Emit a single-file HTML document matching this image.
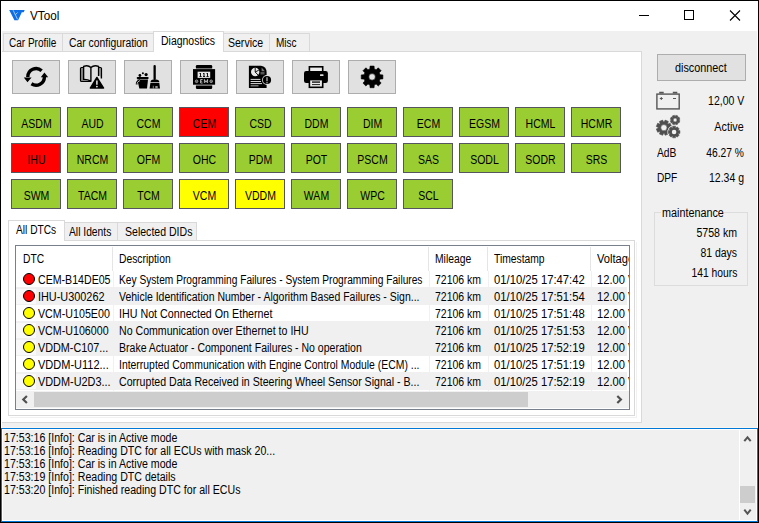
<!DOCTYPE html>
<html><head><meta charset="utf-8"><title>VTool</title>
<style>
*{box-sizing:border-box;margin:0;padding:0}
html,body{width:759px;height:523px;overflow:hidden;background:#000}
body{font-family:"Liberation Sans",sans-serif;font-size:12px;color:#000;position:relative}
div,span,svg{position:absolute}
.x{z-index:3;white-space:nowrap;line-height:14px;height:14px;transform-origin:0 50%}
.x.r{transform-origin:100% 50%}
.x.c{transform-origin:50% 50%;text-align:center}
#win{left:1px;top:1px;width:757px;height:521px;background:#f0f0f0}
#title{left:0;top:0;width:757px;height:30px;background:#fff}
.tab{top:32px;height:19px;background:#f0f0f0;border:1px solid #d9d9d9;border-bottom:none}
.tab.sel{top:30px;height:21px;background:#fff;z-index:2}
#page{left:0px;top:50px;width:641px;height:372px;background:#fff;border:1px solid #d9d9d9;border-left-color:#f4f4f4}
.tb{top:59px;width:48px;height:34px;background:#e1e1e1;border:1px solid #adadad}
.ecu{width:50px;height:30px;border:1px solid #55555f;background:#9acd32}
.ecu.r{background:#ff0000}
.ecu.y{background:#ffff00}
.ecu .x{left:0px;width:49px;top:9px}
.itab{top:221px;height:19px;background:#f0f0f0;border:1px solid #d9d9d9;border-bottom:none}
.itab.sel{top:219px;height:21px;background:#fff;z-index:2}
#ipage{left:7px;top:239px;width:627px;height:176px;background:#fff;border:1px solid #d9d9d9;box-shadow:1px 1px 0 0 #fff,2px 2px 0 0 #f1f1f1}
#lv{left:14px;top:244px;width:615px;height:165px;background:#fff;border:1px solid #7a808b;overflow:hidden}
#lvc{left:-16px;top:-246px;width:759px;height:523px}
.hd{top:247px;height:24px;width:1px;background:#e5e5e5}
.row{left:16px;width:611px;height:17px}
.row.g{background:#f0f0f0;box-shadow:0 -1px 0 0 #f0f0f0}
.row.g .ic{left:0;top:1px;width:20px;height:15px;background:#f9f9f9}
.dot{left:7px;top:2px;width:12px;height:12px;border-radius:50%;border:1px solid #000}
</style></head><body>
<div id="win">

<div id="title">
<svg style="left:-1px;top:-1px" width="40" height="30" viewBox="0 0 40 30"><path d="M9.2 10 L24.7 10 L23.7 12.2 L21.8 12.2 L18.1 20.3 L14.4 20.3 Z" fill="#0d6ee6"/><path d="M13.1 10.2 L17.5 19.3 M15.2 14.9 L17.7 12.4" fill="none" stroke="#dbe9fb" stroke-width=".7"/></svg>
<span class="x" style="top:8px;left:29.0px;transform:scaleX(0.976)">VTool</span>
<svg style="left:638px;top:0" width="119" height="30" viewBox="0 0 119 30" fill="none" stroke="#000" stroke-width="1"><path d="M0 14.500h10"/><rect x="45.500" y="9.500" width="9" height="9"/><path d="M91 9.500l10 10M101 9.500l-10 10" stroke-width="1.100"/></svg>
</div>
<div class="tab" style="left:2px;width:60px"></div>
<div class="tab" style="left:61px;width:92px"></div>
<div class="tab sel" style="left:152px;width:71px"></div>
<div class="tab" style="left:222px;width:47px"></div>
<div class="tab" style="left:268px;width:41px"></div>
<div id="page"></div>
<span class="x" style="top:35px;left:7.7px;transform:scaleX(0.834)">Car Profile</span>
<span class="x" style="top:35px;left:67.8px;transform:scaleX(0.863)">Car configuration</span>
<span class="x" style="top:33px;left:160.3px;transform:scaleX(0.872)">Diagnostics</span>
<span class="x" style="top:35px;left:227.2px;transform:scaleX(0.877)">Service</span>
<span class="x" style="top:35px;left:275.4px;transform:scaleX(0.835)">Misc</span>
<div class="tb" style="left:11px"><svg style="left:-1px;top:-1px" width="48" height="34" viewBox="0 0 48 34"><path d="M15.80 16.90 A8.3 8.3 0 0 1 29.65 10.73" fill="none" stroke="#000" stroke-width="3.4"/><path d="M19.46 23.78 A8.3 8.3 0 0 0 32.40 16.90" fill="none" stroke="#000" stroke-width="3.4"/><path d="M11.8 17.4 L19.6 17.4 L15.5 22.3Z M28.8 17.2 L36.2 17.2 L32.4 12.4Z" fill="#000"/></svg></div>
<div class="tb" style="left:67px"><svg style="left:-1px;top:-1px" width="48" height="34" viewBox="0 0 48 34"><path d="M15.6 6.4 Q20 4.6 22.9 7.6 L22.9 21.2 Q19.5 19.2 15.6 19.4Z" fill="#e1e1e1" stroke="#000" stroke-width="1.4" stroke-linejoin="round"/><path d="M15.6 7.6 L13.4 7.6 Q12.6 7.6 12.6 8.6 L12.6 20.4 Q12.6 21.4 13.6 21.4 L22.9 21.4" fill="none" stroke="#000" stroke-width="1.4"/><path d="M13.3 8.6 L14.9 8.6 L14.9 20 Q18 19.8 21 20.8 L13.3 20.8Z" fill="#777"/><path d="M22.9 7.6 Q26 4.6 30.6 6.4 L30.6 16" fill="none" stroke="#000" stroke-width="1.4" stroke-linejoin="round"/><path d="M30.6 7.6 L32.5 7.6 Q33.4 7.600 33.4 8.600 L33.4 18.500" fill="none" stroke="#000" stroke-width="1.4"/><path d="M31.3 8.6 L32.7 8.6 L32.7 17 L31.3 15Z" fill="#777"/><path d="M28.9 17.4 L35.6 28 L22.3 28Z" fill="#000" stroke="#000" stroke-width="1.4" stroke-linejoin="round"/><path d="M28.9 20.6 L28.9 24.8" stroke="#e8e8e8" stroke-width="1.5"/><circle cx="28.9" cy="26.6" r=".9" fill="#e8e8e8"/></svg></div>
<div class="tb" style="left:123px"><svg style="left:-1px;top:-1px" width="48" height="34" viewBox="0 0 48 34"><rect x="12.7" y="16.9" width="12" height="2.1" rx="1" fill="#000"/><path d="M13.400 19.600 L24 19.600 L23 28.600 L15.300 28.600Z" fill="#000"/><path d="M16.200 20.300 Q12.600 21.500 12.900 24.300" fill="none" stroke="#000" stroke-width="2.2"/><path d="M16.000 20.500 Q13.000 21.700 13.000 24.000" fill="none" stroke="#e1e1e1" stroke-width=".8"/><circle cx="15.9" cy="15.5" r="1.4" fill="#000"/><circle cx="18.9" cy="13.3" r="1" fill="#000"/><circle cx="22.100" cy="14.600" r="1.600" fill="#000"/><rect x="29.5" y="5" width="2.3" height="15" rx="1.1" fill="#000"/><path d="M26.600 22 Q26.600 19.400 29.500 19.400 L31.800 19.400 Q35.300 19.400 35.300 22Z" fill="#000"/><path d="M26.400 22.800 L35.300 22.800 L36 28.600 L25.600 28.600Z" fill="#000"/><path d="M29.300 25.800 V28.600" stroke="#bbb" stroke-width=".7"/><path d="M31.300 26 h2.400 v2.600 h-2.400z" fill="#999"/></svg></div>
<div class="tb" style="left:179px"><svg style="left:-1px;top:-1px" width="48" height="34" viewBox="0 0 48 34"><path d="M15.900 8.500 L15.900 6.300 Q15.900 5.100 17.100 5.100 L31 5.100 Q32.200 5.100 32.200 6.300 L32.200 8.500Z" fill="#000"/><rect x="13" y="9.100" width="22.100" height="15.600" fill="#000"/><path d="M15.900 25.400 L15.900 27.700 Q15.900 28.900 17.100 28.900 L31 28.900 Q32.200 28.900 32.200 27.700 L32.200 25.400Z" fill="#000"/><rect x="17.600" y="11.700" width="12.600" height="6.200" fill="#e6e6e6"/><path d="M20.500 13 V16.600 M24 13 V16.600 M27.500 13 V16.600 M19.500 16.500 H21.600 M23 16.500 H25.100 M26.500 16.500 H28.600 M19.600 14 L20.500 13 M23.100 14 L24 13 M26.600 14 L27.500 13" stroke="#111" stroke-width="1" fill="none"/><path d="M22.600 19.500 H20.600 V23 H22.600 M20.600 21.200 H22.200 M24.400 23 V19.500 L26 22.300 L27.600 19.500 V23" stroke="#ddd" stroke-width=".8" fill="none"/><circle cx="16.600" cy="21.300" r="1.300" fill="none" stroke="#ddd" stroke-width=".7"/><circle cx="31.200" cy="21.300" r="1.300" fill="none" stroke="#ddd" stroke-width=".7"/><path d="M15.800 21.300 H17.400 M30.400 21.300 H32" stroke="#ddd" stroke-width=".6"/></svg></div>
<div class="tb" style="left:235px"><svg style="left:-1px;top:-1px" width="48" height="34" viewBox="0 0 48 34"><path d="M12.900 5.700 L25 5.700 Q30.600 6.500 30.600 12.500 L30.600 28 L12.900 28Z" fill="#000"/><path d="M25.600 7.600 L25.600 11.200 L29 11.200 Z" fill="#777"/><path d="M24.500 12 H28.500 V14.500 H24.500Z" fill="#555"/><circle cx="19.200" cy="12" r="4.200" fill="#e8e8e8"/><path d="M19.200 12 L19.200 7.800 M19.200 12 L22.200 15.200 M19.200 12 L22.800 10.200" stroke="#000" stroke-width=".9"/><path d="M14.600 19.400 H24.400 M14.600 21.500 H25 M14.600 23.600 H26" stroke="#d8d8d8" stroke-width="1"/><path d="M14.600 25.800 H22.500" stroke="#888" stroke-width="1.300"/><circle cx="31" cy="20" r="4.900" fill="#e1e1e1"/><circle cx="31" cy="20" r="4.100" fill="#000"/><path d="M31 17.300 V21.300" stroke="#c4c4c4" stroke-width="1.200"/><circle cx="31" cy="22.800" r=".7" fill="#c4c4c4"/></svg></div>
<div class="tb" style="left:291px"><svg style="left:-1px;top:-1px" width="48" height="34" viewBox="0 0 48 34"><rect x="17.400" y="6.800" width="13.300" height="5" fill="#ececec" stroke="#000" stroke-width="1.600"/><rect x="12" y="11.100" width="23.900" height="11.800" rx="2.200" fill="#000"/><rect x="28" y="14.300" width="3.500" height="1.600" rx=".5" fill="#ddd"/><rect x="17.400" y="19.600" width="13.300" height="7.700" fill="#ececec" stroke="#000" stroke-width="1.600"/><path d="M20 22.100 H28" stroke="#222" stroke-width="1.500"/><path d="M20 24.600 H28" stroke="#222" stroke-width="1"/></svg></div>
<div class="tb" style="left:347px"><svg style="left:-1px;top:-1px" width="48" height="34" viewBox="0 0 48 34"><path fill-rule="evenodd" d="M32.07 14.69 L34.88 14.88 L34.88 18.92 L32.07 19.11 L31.29 20.99 L33.15 23.11 L30.28 25.98 L28.16 24.12 L26.28 24.90 L26.09 27.71 L22.05 27.71 L21.86 24.90 L19.98 24.12 L17.86 25.98 L14.99 23.11 L16.85 20.99 L16.07 19.11 L13.26 18.92 L13.26 14.88 L16.07 14.69 L16.85 12.81 L14.99 10.69 L17.86 7.82 L19.98 9.68 L21.86 8.90 L22.05 6.09 L26.09 6.09 L26.28 8.90 L28.16 9.68 L30.28 7.82 L33.15 10.69 L31.29 12.81Z M20.77 16.90 a3.3 3.3 0 1 0 6.6 0 a3.3 3.3 0 1 0 -6.6 0Z" fill="#000" stroke="#000" stroke-width=".6" stroke-linejoin="round"/></svg></div>
<div class="ecu" style="left:10px;top:106px"><span class="x c" style="transform:scaleX(.875)">ASDM</span></div>
<div class="ecu" style="left:66px;top:106px"><span class="x c" style="transform:scaleX(.875)">AUD</span></div>
<div class="ecu" style="left:122px;top:106px"><span class="x c" style="transform:scaleX(.875)">CCM</span></div>
<div class="ecu r" style="left:178px;top:106px"><span class="x c" style="transform:scaleX(.875)">CEM</span></div>
<div class="ecu" style="left:234px;top:106px"><span class="x c" style="transform:scaleX(.875)">CSD</span></div>
<div class="ecu" style="left:290px;top:106px"><span class="x c" style="transform:scaleX(.875)">DDM</span></div>
<div class="ecu" style="left:346px;top:106px"><span class="x c" style="transform:scaleX(.875)">DIM</span></div>
<div class="ecu" style="left:402px;top:106px"><span class="x c" style="transform:scaleX(.875)">ECM</span></div>
<div class="ecu" style="left:458px;top:106px"><span class="x c" style="transform:scaleX(.875)">EGSM</span></div>
<div class="ecu" style="left:514px;top:106px"><span class="x c" style="transform:scaleX(.875)">HCML</span></div>
<div class="ecu" style="left:570px;top:106px"><span class="x c" style="transform:scaleX(.875)">HCMR</span></div>
<div class="ecu r" style="left:10px;top:142px"><span class="x c" style="transform:scaleX(.875)">IHU</span></div>
<div class="ecu" style="left:66px;top:142px"><span class="x c" style="transform:scaleX(.875)">NRCM</span></div>
<div class="ecu" style="left:122px;top:142px"><span class="x c" style="transform:scaleX(.875)">OFM</span></div>
<div class="ecu" style="left:178px;top:142px"><span class="x c" style="transform:scaleX(.875)">OHC</span></div>
<div class="ecu" style="left:234px;top:142px"><span class="x c" style="transform:scaleX(.875)">PDM</span></div>
<div class="ecu" style="left:290px;top:142px"><span class="x c" style="transform:scaleX(.875)">POT</span></div>
<div class="ecu" style="left:346px;top:142px"><span class="x c" style="transform:scaleX(.875)">PSCM</span></div>
<div class="ecu" style="left:402px;top:142px"><span class="x c" style="transform:scaleX(.875)">SAS</span></div>
<div class="ecu" style="left:458px;top:142px"><span class="x c" style="transform:scaleX(.875)">SODL</span></div>
<div class="ecu" style="left:514px;top:142px"><span class="x c" style="transform:scaleX(.875)">SODR</span></div>
<div class="ecu" style="left:570px;top:142px"><span class="x c" style="transform:scaleX(.875)">SRS</span></div>
<div class="ecu" style="left:10px;top:178px"><span class="x c" style="transform:scaleX(.875)">SWM</span></div>
<div class="ecu" style="left:66px;top:178px"><span class="x c" style="transform:scaleX(.875)">TACM</span></div>
<div class="ecu" style="left:122px;top:178px"><span class="x c" style="transform:scaleX(.875)">TCM</span></div>
<div class="ecu y" style="left:178px;top:178px"><span class="x c" style="transform:scaleX(.875)">VCM</span></div>
<div class="ecu y" style="left:234px;top:178px"><span class="x c" style="transform:scaleX(.875)">VDDM</span></div>
<div class="ecu" style="left:290px;top:178px"><span class="x c" style="transform:scaleX(.875)">WAM</span></div>
<div class="ecu" style="left:346px;top:178px"><span class="x c" style="transform:scaleX(.875)">WPC</span></div>
<div class="ecu" style="left:402px;top:178px"><span class="x c" style="transform:scaleX(.875)">SCL</span></div>
<div class="itab sel" style="left:7px;width:57px"></div>
<div class="itab" style="left:63px;width:54px"></div>
<div class="itab" style="left:116px;width:80px"></div>
<div id="ipage"></div>
<span class="x" style="top:222px;left:15.3px;transform:scaleX(0.849)">All DTCs</span>
<span class="x" style="top:224px;left:68.2px;transform:scaleX(0.857)">All Idents</span>
<span class="x" style="top:224px;left:123.8px;transform:scaleX(0.879)">Selected DIDs</span>
<div id="lv"><div id="lvc">
<div style="left:113px;top:271px;width:1px;height:120px;background:#f1f1f1"></div>
<div style="left:429px;top:271px;width:1px;height:120px;background:#f1f1f1"></div>
<div style="left:488px;top:271px;width:1px;height:120px;background:#f1f1f1"></div>
<div style="left:591px;top:271px;width:1px;height:120px;background:#f1f1f1"></div>
<div class="row" style="top:271px"><div class="dot" style="background:#ff0000"></div></div>
<span class="x" style="top:273px;left:38.3px;transform:scaleX(0.884)">CEM-B14DE05</span>
<span class="x" style="top:273px;left:119.3px;transform:scaleX(0.849)">Key System Programming Failures - System Programming Failures</span>
<span class="x" style="top:273px;left:434.6px;transform:scaleX(0.873)">72106 km</span>
<span class="x" style="top:273px;left:493.6px;transform:scaleX(0.937)">01/10/25 17:47:42</span>
<span class="x" style="top:273px;left:597.0px;transform:scaleX(0.930)">12.00 V</span>
<div class="row g" style="top:288px"><div class="ic"></div><div class="dot" style="background:#ff0000"></div></div>
<span class="x" style="top:290px;left:38.3px;transform:scaleX(0.906)">IHU-U300262</span>
<span class="x" style="top:290px;left:119.3px;transform:scaleX(0.873)">Vehicle Identification Number - Algorithm Based Failures - Sign...</span>
<span class="x" style="top:290px;left:434.6px;transform:scaleX(0.873)">72106 km</span>
<span class="x" style="top:290px;left:493.6px;transform:scaleX(0.937)">01/10/25 17:51:54</span>
<span class="x" style="top:290px;left:597.0px;transform:scaleX(0.930)">12.00 V</span>
<div class="row" style="top:305px"><div class="dot" style="background:#ffff00"></div></div>
<span class="x" style="top:307px;left:38.3px;transform:scaleX(0.890)">VCM-U105E00</span>
<span class="x" style="top:307px;left:119.3px;transform:scaleX(0.892)">IHU Not Connected On Ethernet</span>
<span class="x" style="top:307px;left:434.6px;transform:scaleX(0.873)">72106 km</span>
<span class="x" style="top:307px;left:493.6px;transform:scaleX(0.937)">01/10/25 17:51:48</span>
<span class="x" style="top:307px;left:597.0px;transform:scaleX(0.930)">12.00 V</span>
<div class="row g" style="top:322px"><div class="ic"></div><div class="dot" style="background:#ffff00"></div></div>
<span class="x" style="top:324px;left:38.3px;transform:scaleX(0.889)">VCM-U106000</span>
<span class="x" style="top:324px;left:119.3px;transform:scaleX(0.883)">No Communication over Ethernet to IHU</span>
<span class="x" style="top:324px;left:434.6px;transform:scaleX(0.873)">72106 km</span>
<span class="x" style="top:324px;left:493.6px;transform:scaleX(0.937)">01/10/25 17:51:53</span>
<span class="x" style="top:324px;left:597.0px;transform:scaleX(0.930)">12.00 V</span>
<div class="row g" style="top:339px"><div class="ic"></div><div class="dot" style="background:#ffff00"></div></div>
<span class="x" style="top:341px;left:38.3px;transform:scaleX(0.900)">VDDM-C107...</span>
<span class="x" style="top:341px;left:119.3px;transform:scaleX(0.877)">Brake Actuator - Component Failures - No operation</span>
<span class="x" style="top:341px;left:434.6px;transform:scaleX(0.873)">72106 km</span>
<span class="x" style="top:341px;left:493.6px;transform:scaleX(0.937)">01/10/25 17:52:19</span>
<span class="x" style="top:341px;left:597.0px;transform:scaleX(0.930)">12.00 V</span>
<div class="row" style="top:356px"><div class="dot" style="background:#ffff00"></div></div>
<span class="x" style="top:358px;left:38.3px;transform:scaleX(0.917)">VDDM-U112...</span>
<span class="x" style="top:358px;left:119.3px;transform:scaleX(0.868)">Interrupted Communication with Engine Control Module (ECM) ...</span>
<span class="x" style="top:358px;left:434.6px;transform:scaleX(0.873)">72106 km</span>
<span class="x" style="top:358px;left:493.6px;transform:scaleX(0.937)">01/10/25 17:51:19</span>
<span class="x" style="top:358px;left:597.0px;transform:scaleX(0.930)">12.00 V</span>
<div class="row g" style="top:373px"><div class="ic"></div><div class="dot" style="background:#ffff00"></div></div>
<span class="x" style="top:375px;left:38.3px;transform:scaleX(0.907)">VDDM-U2D3...</span>
<span class="x" style="top:375px;left:119.3px;transform:scaleX(0.883)">Corrupted Data Received in Steering Wheel Sensor Signal - B...</span>
<span class="x" style="top:375px;left:434.6px;transform:scaleX(0.873)">72106 km</span>
<span class="x" style="top:375px;left:493.6px;transform:scaleX(0.937)">01/10/25 17:52:19</span>
<span class="x" style="top:375px;left:597.0px;transform:scaleX(0.930)">12.00 V</span>
<span class="x" style="top:252px;left:23.3px;transform:scaleX(0.855)">DTC</span>
<div class="hd" style="left:112px"></div>
<span class="x" style="top:252px;left:119.0px;transform:scaleX(0.860)">Description</span>
<div class="hd" style="left:428px"></div>
<span class="x" style="top:252px;left:434.6px;transform:scaleX(0.861)">Mileage</span>
<div class="hd" style="left:487px"></div>
<span class="x" style="top:252px;left:493.6px;transform:scaleX(0.859)">Timestamp</span>
<div class="hd" style="left:590px"></div>
<span class="x" style="top:252px;left:597.0px;transform:scaleX(0.930)">Voltage</span>
<div style="left:16px;top:391px;width:613px;height:17px;background:#f0f0f0"></div>
<div style="left:34px;top:392px;width:494px;height:15px;background:#cdcdcd"></div>
<svg style="left:16px;top:391px" width="17" height="17" viewBox="0 0 17 17" fill="none" stroke="#505050" stroke-width="2.200"><path d="M10.900 5L7.300 8.500L10.900 12"/></svg>
<svg style="left:611px;top:391px" width="17" height="17" viewBox="0 0 17 17" fill="none" stroke="#505050" stroke-width="2.200"><path d="M6.300 5L9.900 8.500L6.300 12"/></svg>
</div></div>
<div style="left:656px;top:53px;width:89px;height:27px;background:#e1e1e1;border:1px solid #adadad"></div>
<span class="x" style="top:60px;left:673.6px;transform:scaleX(0.901)">disconnect</span>
<span class="x r" style="top:93px;left:701.4px;width:42.3px;text-align:right;transform:scaleX(0.875)">12,00 V</span>
<span class="x r" style="top:119px;left:708.9px;width:33.7px;text-align:right;transform:scaleX(0.897)">Active</span>
<span class="x" style="top:145px;left:656.4px;transform:scaleX(0.856)">AdB</span>
<span class="x r" style="top:145px;left:698.3px;width:45.0px;text-align:right;transform:scaleX(0.855)">46.27 %</span>
<span class="x" style="top:170px;left:656.4px;transform:scaleX(0.846)">DPF</span>
<span class="x r" style="top:170px;left:701.8px;width:41.0px;text-align:right;transform:scaleX(0.875)">12.34 g</span>
<svg style="left:655px;top:90px" width="25" height="19" viewBox="0 0 25 19" fill="none" stroke="#555"><rect x="0.900" y="3.100" width="22.300" height="14.800" stroke-width="1.400"/><path d="M3.200 1.600h4.500M16.800 1.600h4.500" stroke-width="1.800"/><path d="M3.800 7.500h3M5.300 6v3M17 7.500h3" stroke-width="1"/></svg>
<svg id="gears" style="left:654px;top:113px" width="26" height="25" viewBox="0 0 26 25"><path fill-rule="evenodd" d="M23.60 6.10 L24.94 6.73 L24.06 8.89 L22.66 8.39 L22.50 8.55 L23.01 9.94 L20.86 10.84 L20.22 9.50 L20.00 9.50 L19.37 10.84 L17.21 9.96 L17.71 8.56 L17.55 8.40 L16.16 8.91 L15.26 6.76 L16.60 6.12 L16.60 5.90 L15.26 5.27 L16.14 3.11 L17.54 3.61 L17.70 3.45 L17.19 2.06 L19.34 1.16 L19.98 2.50 L20.20 2.50 L20.83 1.16 L22.99 2.04 L22.49 3.44 L22.65 3.60 L24.04 3.09 L24.94 5.24 L23.60 5.88Z M18.20 6.00 a1.9 1.9 0 1 0 3.8 0 a1.9 1.9 0 1 0 -3.8 0Z" fill="#4f4f4f" stroke="#4f4f4f" stroke-width=".5" stroke-linejoin="round"/><path fill-rule="evenodd" d="M14.49 13.98 L16.50 14.93 L15.17 18.17 L13.07 17.43 L12.66 17.85 L13.41 19.94 L10.17 21.29 L9.21 19.29 L8.62 19.29 L7.67 21.30 L4.43 19.97 L5.17 17.87 L4.75 17.46 L2.66 18.21 L1.31 14.97 L3.31 14.01 L3.31 13.42 L1.30 12.47 L2.63 9.23 L4.73 9.97 L5.14 9.55 L4.39 7.46 L7.63 6.11 L8.59 8.11 L9.18 8.11 L10.13 6.10 L13.37 7.43 L12.63 9.53 L13.05 9.94 L15.14 9.19 L16.49 12.43 L14.49 13.39Z M5.80 13.70 a3.1 3.1 0 1 0 6.2 0 a3.1 3.1 0 1 0 -6.2 0Z" fill="#4f4f4f" stroke="#4f4f4f" stroke-width=".6" stroke-linejoin="round"/><path d="M23.12 16.49 L24.93 16.57 L24.93 19.43 L23.12 19.51 L23.02 19.77 L24.23 21.11 L22.21 23.13 L20.87 21.92 L20.61 22.02 L20.53 23.83 L17.67 23.83 L17.59 22.02 L17.33 21.92 L15.99 23.13 L13.97 21.11 L15.18 19.77 L15.08 19.51 L13.27 19.43 L13.27 16.57 L15.08 16.49 L15.18 16.23 L13.97 14.89 L15.99 12.87 L17.33 14.08 L17.59 13.98 L17.67 12.17 L20.53 12.17 L20.61 13.98 L20.87 14.08 L22.21 12.87 L24.23 14.89 L23.02 16.23Z" fill="#4f4f4f" stroke="#f0f0f0" stroke-width="1.7" stroke-linejoin="round"/><path d="M23.12 16.49 L24.93 16.57 L24.93 19.43 L23.12 19.51 L23.02 19.77 L24.23 21.11 L22.21 23.13 L20.87 21.92 L20.61 22.02 L20.53 23.83 L17.67 23.83 L17.59 22.02 L17.33 21.92 L15.99 23.13 L13.97 21.11 L15.18 19.77 L15.08 19.51 L13.27 19.43 L13.27 16.57 L15.08 16.49 L15.18 16.23 L13.97 14.89 L15.99 12.87 L17.33 14.08 L17.59 13.98 L17.67 12.17 L20.53 12.17 L20.61 13.98 L20.87 14.08 L22.21 12.87 L24.23 14.89 L23.02 16.23Z" fill="#4f4f4f" stroke="#4f4f4f" stroke-width=".5" stroke-linejoin="round"/><circle cx="19.100" cy="18" r="2.300" fill="#f0f0f0"/></svg>
<div style="left:653px;top:211px;width:94px;height:74px;border:1px solid #dcdcdc"></div>
<div style="left:660px;top:204px;width:63px;height:14px;background:#f0f0f0"></div>
<span class="x" style="top:205px;left:660.6px;transform:scaleX(0.900)">maintenance</span>
<span class="x r" style="top:225px;left:689.2px;width:47.0px;text-align:right;transform:scaleX(0.882)">5758 km</span>
<span class="x r" style="top:245px;left:693.2px;width:43.0px;text-align:right;transform:scaleX(0.871)">81 days</span>
<span class="x r" style="top:265px;left:681.8px;width:54.4px;text-align:right;transform:scaleX(0.860)">141 hours</span>
<div id="log" style="left:0;top:427px;width:757px;height:94px;border:1px solid #0078d7;background:#f0f0f0;box-shadow:inset 0 0 0 1px #fff"></div>
<div style="left:0;top:426px;width:757px;height:1px;background:#f9f6f2"></div>
<div style="left:0;top:0;width:1px;height:427px;background:#fff;z-index:5"></div>
<div style="left:756px;top:0;width:1px;height:427px;background:#fff;z-index:5"></div>
<span class="x" style="top:430px;left:3.0px;transform:scaleX(0.884)">17:53:16 [Info]: Car is in Active mode</span>
<span class="x" style="top:443px;left:3.0px;transform:scaleX(0.884)">17:53:16 [Info]: Reading DTC for all ECUs with mask 20...</span>
<span class="x" style="top:456px;left:3.0px;transform:scaleX(0.884)">17:53:16 [Info]: Car is in Active mode</span>
<span class="x" style="top:469px;left:3.0px;transform:scaleX(0.884)">17:53:19 [Info]: Reading DTC details</span>
<span class="x" style="top:482px;left:3.0px;transform:scaleX(0.884)">17:53:20 [Info]: Finished reading DTC for all ECUs</span>
<div style="left:738px;top:429px;width:1px;height:91px;background:#fff"></div>
<div style="left:739px;top:485px;width:15px;height:17px;background:#cdcdcd"></div>
<svg style="left:739px;top:430px" width="16" height="17" viewBox="0 0 16 17" fill="none" stroke="#555" stroke-width="2"><path d="M4.300 10.200L7.500 6.300L10.700 10.200"/></svg>
<svg style="left:739px;top:502px" width="16" height="17" viewBox="0 0 16 17" fill="none" stroke="#555" stroke-width="2"><path d="M4.300 6.700L7.500 10.600L10.700 6.700"/></svg>
</div></body></html>
